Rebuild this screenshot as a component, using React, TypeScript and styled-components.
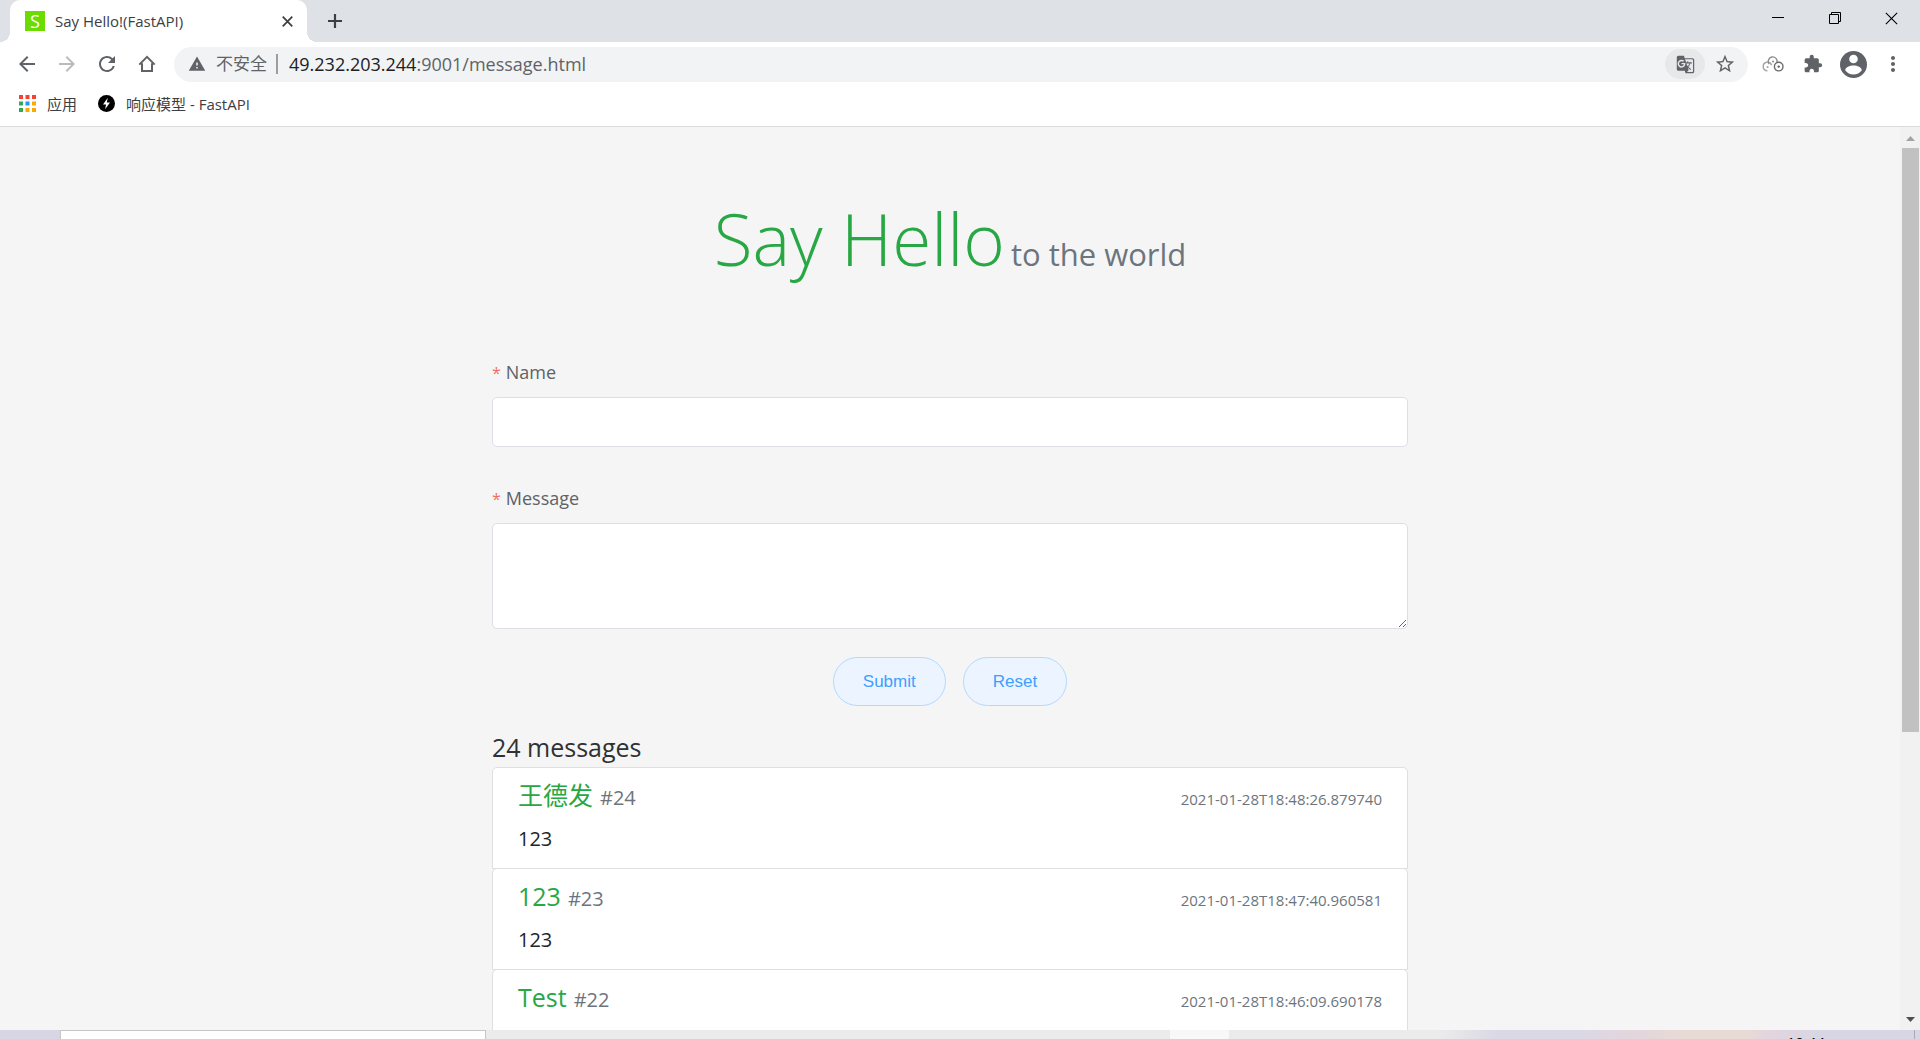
import React from "react";
import styled, { createGlobalStyle } from "styled-components";
import {
  MdArrowBack,
  MdArrowForward,
  MdRefresh,
  MdGTranslate,
  MdStarBorder,
  MdExtension,
  MdMoreVert,
  MdWarning,
} from "react-icons/md";

const uiFont = `"Open Sans", "Noto Sans CJK SC", sans-serif`;

const GlobalStyle = createGlobalStyle`
  *, *::before, *::after { box-sizing: border-box; }
  body { margin: 0; overflow: hidden; font-family: ${uiFont}; }
  button, input, textarea { margin: 0; font: inherit; }
  a { color: inherit; text-decoration: none; }
  svg { display: block; flex: none; }
`;

const Screen = styled.div`
  display: flex;
  flex-direction: column;
  height: 100vh;
  background: #f5f5f5;
`;

/* ---------- browser frame ---------- */

const TabStrip = styled.header`
  display: flex;
  flex: none;
  height: 42px;
  padding-left: 10px;
  background: #dee1e6;
`;

const Tab = styled.div`
  position: relative;
  display: flex;
  align-items: center;
  gap: 10px;
  width: 297px;
  padding: 0 12px 0 15px;
  border-radius: 10px 10px 0 0;
  background: #fff;
  color: #3c4043;
  font-size: 15px;
  line-height: 20px;

  &::before,
  &::after {
    content: "";
    position: absolute;
    bottom: 0;
    width: 10px;
    height: 10px;
  }
  &::before {
    left: -10px;
    background: radial-gradient(circle at 0 0, #dee1e6 10px, #fff 10px);
  }
  &::after {
    right: -10px;
    background: radial-gradient(circle at 100% 0, #dee1e6 10px, #fff 10px);
  }
`;

const Favicon = styled.span`
  width: 20px;
  height: 20px;
  background: #6bdb00;
  color: #fff;
  font-size: 18px;
  line-height: 20px;
  text-align: center;
`;

const TabTitle = styled.span`
  flex: 1;
`;

const IconButton = styled.button<{ $w?: number; $h?: number; $color?: string }>`
  display: flex;
  flex: none;
  align-items: center;
  justify-content: center;
  width: ${(p) => p.$w ?? 40}px;
  height: ${(p) => p.$h ?? 36}px;
  padding: 0;
  border: 0;
  background: transparent;
  color: ${(p) => p.$color ?? "#5f6368"};
`;

const WindowControls = styled.div`
  display: flex;
  margin-left: auto;
`;

const Toolbar = styled.nav`
  display: flex;
  flex: none;
  align-items: center;
  height: 44px;
  padding: 0 7px;
  background: #fff;
`;

const AddressBar = styled.div`
  display: flex;
  flex: 1;
  align-items: center;
  height: 35px;
  margin: 0 5px 0 7px;
  padding: 0 3px 0 14px;
  border-radius: 18px;
  background: #f1f3f4;
  color: #5f6368;
  font-size: 17px;
  line-height: 24px;
`;

const Insecure = styled.span`
  margin-left: 10px;
  padding-right: 9px;
  white-space: nowrap;
`;

const Divider = styled.span`
  width: 2px;
  height: 20px;
  margin-right: 11px;
  background: #9a9da1;
`;

const Url = styled.span`
  flex: 1;
  font-size: 18px;
  b {
    color: #202124;
    font-weight: 400;
  }
`;

const TranslateButton = styled(IconButton)`
  border-radius: 15px;
  background: #e7e8ea;
`;

const Bookmarks = styled.nav`
  display: flex;
  flex: none;
  gap: 21px;
  align-items: center;
  height: 41px;
  padding: 0 19px 5px;
  border-bottom: 1px solid #d9dbde;
  background: #fff;
  color: #3c4043;
  font-size: 15px;
  line-height: 20px;
`;

const Bookmark = styled.a`
  display: flex;
  gap: 11px;
  align-items: center;
`;

/* ---------- page ---------- */

const Viewport = styled.div`
  display: flex;
  flex: 1;
  min-height: 0;
`;

const Page = styled.main`
  display: flex;
  flex: 1;
  flex-direction: column;
  align-items: center;
  overflow: hidden;
  color: #303133;
`;

const Title = styled.h1`
  margin: 64px 0 58px;
  color: #28a745;
  font-size: 71px;
  font-weight: 300;
  line-height: 96px;
  white-space: nowrap;

  small {
    margin-left: 6px;
    color: #6c757d;
    font-size: 31px;
    font-weight: 400;
  }
`;

const Column = styled.div`
  width: 916px;
  max-width: calc(100% - 40px);
`;

const Field = styled.div<{ $last?: boolean }>`
  display: flex;
  flex-direction: column;
  margin-bottom: ${(p) => (p.$last ? 28 : 39)}px;
`;

const Label = styled.label`
  padding-bottom: 12px;
  color: #606266;
  font-size: 18px;
  line-height: 24px;

  &::before {
    content: "*";
    margin-right: 5px;
    color: #f56c6c;
    font-size: 16px;
  }
`;

const TextInput = styled.input`
  width: 100%;
  height: 50px;
  padding: 0 18px;
  border: 1px solid #dcdfe6;
  border-radius: 5px;
  background: #fff;
  font-size: 18px;
`;

const TextArea = styled.textarea`
  display: block;
  width: 100%;
  height: 106px;
  padding: 6px 18px;
  border: 1px solid #dcdfe6;
  border-radius: 5px;
  background: #fff;
  font-size: 18px;
  resize: vertical;
`;

const Actions = styled.div`
  display: flex;
  gap: 17px;
  justify-content: center;
  margin-bottom: 26px;
`;

const PillButton = styled.button`
  height: 49px;
  padding: 0 29px;
  border: 1px solid #b3d8ff;
  border-radius: 25px;
  background: #ecf5ff;
  color: #409eff;
  font-family: "Liberation Sans", Arial, sans-serif;
  font-size: 17px;
`;

const Count = styled.h2`
  margin: 0 0 4px;
  font-size: 25px;
  font-weight: 400;
  line-height: 31px;
`;

const Messages = styled.ul`
  margin: 0;
  padding: 0;
  list-style: none;
`;

const Message = styled.li`
  height: 102px;
  margin-bottom: -1px;
  padding: 10px 25px;
  border: 1px solid #dddfe0;
  border-radius: 5px 5px 0 0;
  background: #fff;
`;

const MessageHead = styled.div`
  display: flex;
  gap: 7px;
  align-items: baseline;
  height: 44px;
  color: #6c757d;
  font-size: 20px;
  line-height: 34px;
`;

const Author = styled.span`
  color: #28a745;
  font-size: 25px;
`;

const Stamp = styled.time`
  margin-left: auto;
  font-size: 15px;
`;

const Body = styled.p`
  margin: 0;
  color: #212529;
  font-size: 20px;
  line-height: 34px;
`;

const ScrollBar = styled.div`
  display: flex;
  flex: none;
  flex-direction: column;
  justify-content: space-between;
  width: 20px;
  background: #f1f1f1;
`;

const ScrollTrack = styled.div`
  flex: 1;
  padding: 1px 1px 0 2px;
`;

const ScrollThumb = styled.div`
  height: 67.7%;
  background: #c1c1c1;
`;

/* ---------- desktop task bar ---------- */

const TaskBar = styled.footer`
  display: flex;
  flex: none;
  height: 9px;
  overflow: hidden;
  background: linear-gradient(
    90deg,
    #d8d6e4 0 60px,
    #ebebeb 60px 75%,
    #dad8e5 78% 82%,
    #e3d6dd 85%,
    #e8dbd5 88% 91%,
    #e2d5df 92%,
    #d8d6e4 95%
  );
`;

const SearchBox = styled.div`
  width: 426px;
  margin-left: 60px;
  border: 1px solid #c5c6c7;
  border-bottom: 0;
  background: #fff;
`;

const ActiveTask = styled.div`
  width: 59px;
  margin-left: 684px;
  background: #f8f8f8;
`;

const Clock = styled.time`
  margin-left: auto;
  padding: 2px 89px 0 0;
  border-right: 1px solid #aaa8b5;
  margin-right: 5px;
  color: #000;
  font-size: 15px;
  line-height: 20px;
`;

const HomeIcon = () => (
  <svg width="18" height="18" viewBox="0 0 18 18" fill="none" stroke="#5f6368" strokeWidth="2">
    <path d="M1.3 9.6 9 1.9l7.7 7.7M4 8.2v7.9h10V8.2" />
  </svg>
);

const CloseIcon = ({ size, width }: { size: number; width: number }) => (
  <svg width={size} height={size} viewBox="0 0 12 12" stroke="currentColor" strokeWidth={width}>
    <path d="m.8.8 10.4 10.4M11.2.8.8 11.2" />
  </svg>
);

const SwirlIcon = () => (
  <svg width="22" height="16" viewBox="0 0 22 16" fill="none" strokeWidth="1.4">
    <path d="M5.4 14.8A4.300 4.300 0 1 1 9.600 9.200" stroke="#a3a3a3" />
    <path d="M7.200 8A4.400 4.400 0 1 1 14.900 6.600" stroke="#8c8c8c" />
    <circle cx="16.700" cy="10.600" r="4.300" stroke="#6b6b6b" />
    <circle cx="5.600" cy="10.900" r="1" fill="#a3a3a3" />
    <circle cx="11" cy="5.400" r="1" fill="#8c8c8c" />
    <circle cx="16.700" cy="10.600" r="1.200" fill="#5f5f5f" />
  </svg>
);

const AvatarIcon = () => (
  <svg width="27" height="27" viewBox="0 0 27 27">
    <circle cx="13.5" cy="13.5" r="13.5" fill="#5f6368" />
    <circle cx="13.5" cy="8" r="4.3" fill="#fff" />
    <path d="M5.2 19.3c0-3.3 4.6-4.9 8.3-4.9s8.3 1.6 8.3 4.9c-1.9 2.6-4.9 4.3-8.3 4.3s-6.4-1.7-8.3-4.3z" fill="#fff" />
  </svg>
);

const appColors = ["#f44336", "#f44336", "#f44336", "#34a853", "#2196f3", "#f9ab00", "#34a853", "#f9ab00", "#f9ab00"];

const AppsIcon = () => (
  <svg width="17" height="17" viewBox="0 0 17 17">
    {appColors.map((color, i) => (
      <rect key={i} x={(i % 3) * 6.5} y={Math.floor(i / 3) * 6.5} width="4" height="4" fill={color} />
    ))}
  </svg>
);

const BoltIcon = () => (
  <svg width="17" height="17" viewBox="0 0 17 17">
    <circle cx="8.5" cy="8.5" r="8.5" fill="#000" />
    <path d="M9.8 2.8 5 9.4h3.1l-1 4.9 4.9-6.9H8.8z" fill="#fff" />
  </svg>
);

const Arrow = ({ down }: { down?: boolean }) => (
  <svg width="20" height="20" viewBox="0 0 20 20">
    <path d={down ? "M6 7h9l-4.5 5z" : "M6 14h9l-4.5-5z"} fill={down ? "#505050" : "#a3a3a3"} />
  </svg>
);

const messages = [
  { id: 24, name: "王德发", body: "123", time: "2021-01-28T18:48:26.879740" },
  { id: 23, name: "123", body: "123", time: "2021-01-28T18:47:40.960581" },
  { id: 22, name: "Test", body: "", time: "2021-01-28T18:46:09.690178" },
];

export default function App() {
  return (
    <Screen>
      <GlobalStyle />
      <TabStrip>
        <Tab>
          <Favicon>S</Favicon>
          <TabTitle>Say Hello!(FastAPI)</TabTitle>
          <IconButton $w={16} $h={20} $color="#3c4043" aria-label="Close tab">
            <CloseIcon size={11} width={1.9} />
          </IconButton>
        </Tab>
        <IconButton $w={56} $h={42} $color="#3c4043" aria-label="New tab">
          <svg width="14" height="14" viewBox="0 0 14 14" stroke="currentColor" strokeWidth="2.2">
            <path d="M7 0v14M0 7h14" />
          </svg>
        </IconButton>
        <WindowControls>
          <IconButton $w={57} $color="#000" aria-label="Minimize">
            <svg width="12" height="12" viewBox="0 0 12 12">
              <path d="M0 5h12v1H0z" />
            </svg>
          </IconButton>
          <IconButton $w={57} $color="#000" aria-label="Restore">
            <svg width="12" height="12" viewBox="0 0 12 12" fill="none" stroke="currentColor">
              <path d="M.5 2.5h9v9h-9zM2.5 2.5v-2h9v9h-2" />
            </svg>
          </IconButton>
          <IconButton $w={57} $color="#000" aria-label="Close window">
            <CloseIcon size={13} width={1} />
          </IconButton>
        </WindowControls>
      </TabStrip>

      <Toolbar>
        <IconButton aria-label="Back"><MdArrowBack size={24} /></IconButton>
        <IconButton $color="#babcbe" aria-label="Forward"><MdArrowForward size={24} /></IconButton>
        <IconButton aria-label="Reload"><MdRefresh size={24} /></IconButton>
        <IconButton aria-label="Home"><HomeIcon /></IconButton>
        <AddressBar>
          <MdWarning size={18} />
          <Insecure>不安全</Insecure>
          <Divider />
          <Url><b>49.232.203.244</b>:9001/message.html</Url>
          <TranslateButton $h={30} aria-label="Translate this page"><MdGTranslate size={19} /></TranslateButton>
          <IconButton aria-label="Bookmark this page"><MdStarBorder size={22} /></IconButton>
        </AddressBar>
        <IconButton aria-label="Extension"><SwirlIcon /></IconButton>
        <IconButton aria-label="Extensions"><MdExtension size={20} /></IconButton>
        <IconButton aria-label="Profile"><AvatarIcon /></IconButton>
        <IconButton aria-label="Menu"><MdMoreVert size={24} /></IconButton>
      </Toolbar>

      <Bookmarks>
        <Bookmark href="#apps"><AppsIcon />应用</Bookmark>
        <Bookmark href="#fastapi"><BoltIcon />响应模型 - FastAPI</Bookmark>
      </Bookmarks>

      <Viewport>
        <Page>
          <Title>Say Hello<small>to the world</small></Title>
          <Column>
            <form onSubmit={(e) => e.preventDefault()}>
              <Field>
                <Label htmlFor="name">Name</Label>
                <TextInput id="name" type="text" />
              </Field>
              <Field $last>
                <Label htmlFor="message">Message</Label>
                <TextArea id="message" />
              </Field>
              <Actions>
                <PillButton type="submit">Submit</PillButton>
                <PillButton type="reset">Reset</PillButton>
              </Actions>
            </form>
            <Count>24 messages</Count>
            <Messages>
              {messages.map((m) => (
                <Message key={m.id}>
                  <MessageHead>
                    <Author>{m.name}</Author>
                    <span>#{m.id}</span>
                    <Stamp>{m.time}</Stamp>
                  </MessageHead>
                  <Body>{m.body}</Body>
                </Message>
              ))}
            </Messages>
          </Column>
        </Page>
        <ScrollBar>
          <Arrow />
          <ScrollTrack><ScrollThumb /></ScrollTrack>
          <Arrow down />
        </ScrollBar>
      </Viewport>

      <TaskBar>
        <SearchBox />
        <ActiveTask />
        <Clock>19:44</Clock>
      </TaskBar>
    </Screen>
  );
}
